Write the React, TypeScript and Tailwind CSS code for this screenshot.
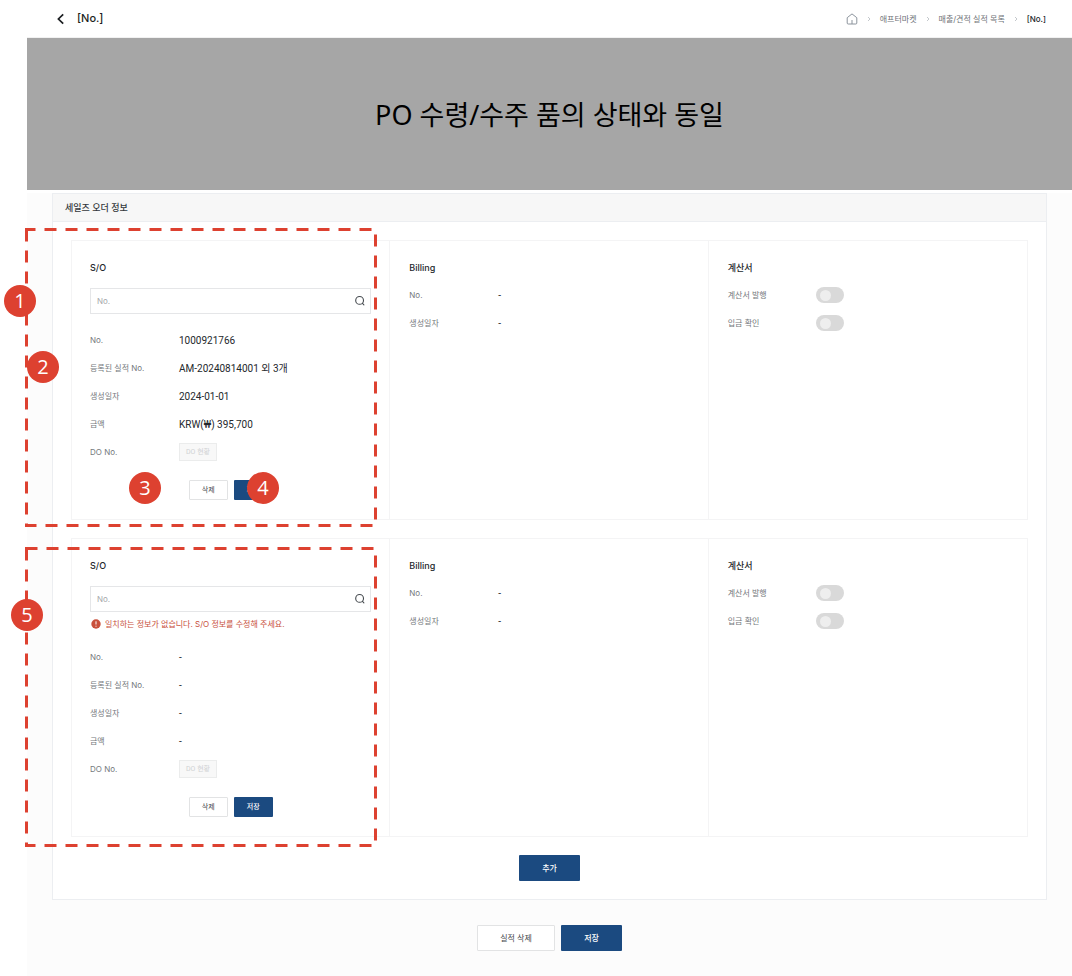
import { useId, type ReactNode } from "react";

function ChevronLeft() {
  return (
    <svg className="h-3 w-3" viewBox="0 0 12 12" fill="none" stroke="#1c1f22" strokeWidth="1.7">
      <path d="M8.2 1.3 3.4 6l4.8 4.7" />
    </svg>
  );
}

function HomeIcon() {
  return (
    <svg className="h-3 w-3" viewBox="0 0 12 12" fill="none" stroke="#8b939c" strokeWidth="1" strokeLinejoin="round">
      <path d="M1.2 4.7 6 .9l4.8 3.8V10a1 1 0 0 1-1 1H2.2a1 1 0 0 1-1-1Z" />
      <path d="M6 7v4" />
    </svg>
  );
}

function Separator() {
  return (
    <svg className="h-2 w-2" viewBox="0 0 8 8" fill="none" stroke="#c4c8cc" strokeWidth="1" aria-hidden="true">
      <path d="m3 2 2 2-2 2" />
    </svg>
  );
}

function SearchIcon() {
  return (
    <svg className="h-3 w-3" viewBox="0 0 12 12" fill="none" stroke="#44494e" strokeWidth="1.1" strokeLinecap="round">
      <circle cx="5.6" cy="5.4" r="3.9" />
      <path d="m8.5 8.4 1.4 1.4" />
    </svg>
  );
}

function AlertIcon() {
  return (
    <svg className="h-[10px] w-[10px]" viewBox="0 0 10 10" aria-hidden="true">
      <circle cx="5" cy="5" r="4.7" fill="#c8503c" />
      <path d="M5 2.3v3.2M5 6.7v1" stroke="#fff" strokeWidth="1" />
    </svg>
  );
}

function Badge({ n, className }: { n: number; className: string }) {
  return (
    <span
      className={`absolute flex h-8 w-8 items-center justify-center rounded-full bg-[#dd4130] font-['Open_Sans','Noto_Sans',sans-serif] text-xl leading-none text-white ${className}`}
    >
      {n}
    </span>
  );
}

function Outline({ bottom, className }: { bottom: number; className: string }) {
  return (
    <svg
      className={`pointer-events-none absolute h-[300px] w-[352px] ${className}`}
      viewBox="0 0 352 300"
      fill="none"
      stroke="#dd4130"
      strokeWidth="3"
      strokeDasharray="12 9"
      aria-hidden="true"
    >
      <path d={`M1.5 1.5V${bottom}H350.5V1.5Z`} />
    </svg>
  );
}

function Field({ label, children }: { label: string; children: ReactNode }) {
  return (
    <div className="flex h-7 items-center">
      <dt className="w-[89px] shrink-0 text-[8px] text-[#74787c]">{label}</dt>
      <dd className="font-['Roboto','Noto_Sans_CJK_KR',sans-serif] text-[10px] text-[#24282c]">{children}</dd>
    </div>
  );
}

function Toggle({ label }: { label: string }) {
  const id = useId();
  return (
    <div className="flex h-7 items-center">
      <label htmlFor={id} className="w-[88px] shrink-0 text-[8px] text-[#74787c]">
        {label}
      </label>
      <input
        id={id}
        type="checkbox"
        role="switch"
        className="flex h-4 w-7 appearance-none items-center rounded-full bg-[#d9d9d9] px-1 before:h-[11px] before:w-[11px] before:rounded-full before:bg-[#eeeeee] before:content-[''] checked:justify-end checked:bg-[#1b4a80]"
      />
    </div>
  );
}

const heading = "h-4 text-[9px] leading-4 font-medium text-[#24282c]";

type Order = { no: string; registered: string; created: string; amount: string; error?: string };

function OrderRow({ order, children }: { order: Order; children: ReactNode }) {
  return (
    <article className="relative border border-[#f4f4f5]">
      <div className="grid grid-cols-3 divide-x divide-[#f4f4f5]">
        <section className="px-[18px] py-[19px]">
          <h3 className={heading}>S/O</h3>
          <div className="mt-3 flex h-[26px] items-center border border-[#e5e6e8] bg-white pr-1">
            <input
              aria-label="No."
              placeholder="No."
              className="h-full min-w-0 flex-1 px-[6px] text-[8px] text-[#24282c] outline-none placeholder:text-[#a5a8ab]"
            />
            <button type="button" aria-label="검색">
              <SearchIcon />
            </button>
          </div>
          {order.error && (
            <p className="mt-1 flex h-[15px] items-center gap-1 pl-px text-[8px] text-[#c8503c]">
              <AlertIcon />
              {order.error}
            </p>
          )}
          <dl className="mt-3">
            <Field label="No.">{order.no}</Field>
            <Field label="등록된 실적 No.">{order.registered}</Field>
            <Field label="생성일자">{order.created}</Field>
            <Field label="금액">{order.amount}</Field>
            <Field label="DO No.">
              <button
                type="button"
                disabled
                className="flex h-[18px] w-[38px] items-center justify-center border border-[#ebecec] bg-[#f8f8f8] text-[7px] text-[#d0d2d4]"
              >
                DO 현황
              </button>
            </Field>
          </dl>
          <div className="mt-[14px] flex justify-center gap-[6px]">
            <button type="button" className="h-5 w-[39px] rounded-[1px] border border-[#e2e3e4] bg-white text-[7px] text-[#44484c]">
              삭제
            </button>
            <button type="button" className="h-5 w-[39px] rounded-[1px] bg-[#1b4a80] text-[7px] font-medium text-white">
              저장
            </button>
          </div>
        </section>
        <section className="px-[19px] py-[19px]">
          <h3 className={heading}>Billing</h3>
          <dl className="mt-[5px]">
            <Field label="No.">-</Field>
            <Field label="생성일자">-</Field>
          </dl>
        </section>
        <section className="px-[19px] py-[19px]">
          <h3 className={heading}>계산서</h3>
          <div className="mt-[5px]">
            <Toggle label="계산서 발행" />
            <Toggle label="입금 확인" />
          </div>
        </section>
      </div>
      {children}
    </article>
  );
}

export default function App() {
  return (
    <div className="flex min-h-screen flex-col bg-white pl-[27px] font-['Inter','Noto_Sans_CJK_KR',sans-serif]">
      <header className="flex h-[38px] items-center justify-between border-b border-[#f1f1f1] pr-[26px] pl-7">
        <div className="flex items-center gap-[10px]">
          <button type="button" aria-label="뒤로">
            <ChevronLeft />
          </button>
          <h1 className="text-[11px] font-medium text-[#1c1f22]">[No.]</h1>
        </div>
        <nav className="flex items-center gap-[7px] text-[8px] text-[#6f7377]">
          <a href="#home" aria-label="홈">
            <HomeIcon />
          </a>
          <Separator />
          <a href="#aftermarket">애프터마켓</a>
          <Separator />
          <a href="#list">매출/견적 실적 목록</a>
          <Separator />
          <span className="font-medium text-[#24282c]">[No.]</span>
        </nav>
      </header>

      <div className="flex h-[152px] items-center justify-center bg-[#a6a6a6]">
        <p className="font-['Noto_Sans','Noto_Sans_CJK_KR',sans-serif] text-[27px] leading-none text-black">
          PO 수령/수주 품의 상태와 동일
        </p>
      </div>

      <main className="mt-[3px] flex-1 bg-[#fcfcfc] px-[25px] pb-[25px]">
        <section className="border border-[#eceef1] bg-white">
          <h2 className="flex h-7 items-center border-b border-[#eceef1] bg-[#f7f7f7] px-3 text-[9px] font-medium text-[#34383c]">
            세일즈 오더 정보
          </h2>
          <div className="flex flex-col gap-[18px] p-[18px]">
            <OrderRow
              order={{
                no: "1000921766",
                registered: "AM-20240814001 외 3개",
                created: "2024-01-01",
                amount: "KRW(₩) 395,700",
              }}
            >
              <Outline bottom={297.5} className="-top-[13px] -left-[47px]" />
              <Badge n={1} className="top-11 -left-[68px]" />
              <Badge n={2} className="top-[110px] -left-[45px]" />
              <Badge n={3} className="top-[231px] left-[57px]" />
              <Badge n={4} className="top-[231px] left-[175px]" />
            </OrderRow>
            <OrderRow
              order={{
                no: "-",
                registered: "-",
                created: "-",
                amount: "-",
                error: "일치하는 정보가 없습니다. S/O 정보를 수정해 주세요.",
              }}
            >
              <Outline bottom={298.5} className="top-2 -left-[47px]" />
              <Badge n={5} className="top-[60px] -left-[61px]" />
            </OrderRow>
            <button type="button" className="h-[26px] w-[61px] self-center rounded-[1px] bg-[#1b4a80] text-[8px] font-medium text-white">
              추가
            </button>
          </div>
        </section>
        <div className="mt-[25px] flex justify-center gap-[6px]">
          <button type="button" className="h-[26px] w-[78px] rounded-[1px] border border-[#e2e3e4] bg-white text-[8px] text-[#44484c]">
            실적 삭제
          </button>
          <button type="button" className="h-[26px] w-[61px] rounded-[1px] bg-[#1b4a80] text-[8px] font-medium text-white">
            저장
          </button>
        </div>
      </main>
    </div>
  );
}
